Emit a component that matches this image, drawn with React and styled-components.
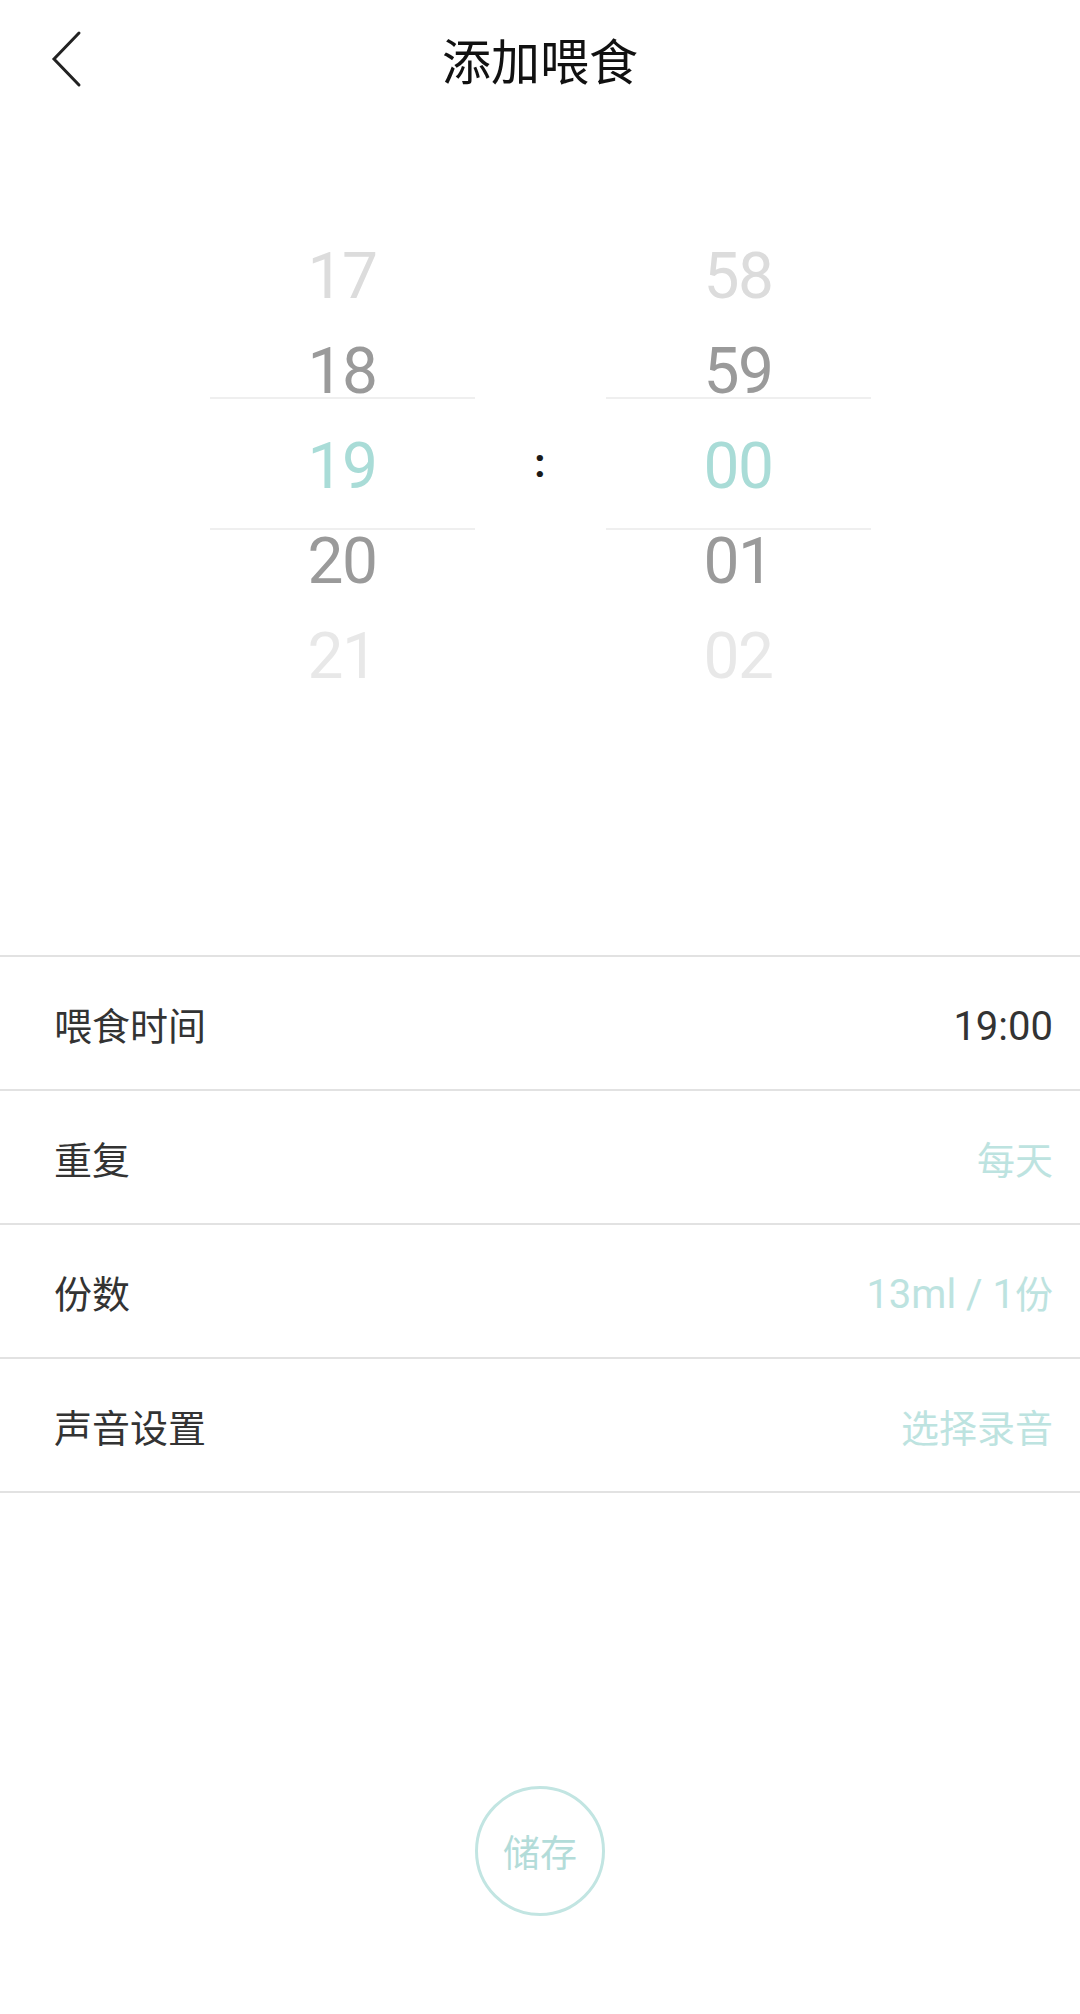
import React from "react";
import styled, { createGlobalStyle } from "styled-components";

const Global = createGlobalStyle`
  html, body { margin: 0; padding: 0; background: #fff; }
  body { font-family: Roboto, "Noto Sans CJK SC", sans-serif; }
  * { box-sizing: border-box; }
`;

const Page = styled.div`
  width: 1080px;
  min-height: 2014px;
  background: #fff;
  display: flex;
  flex-direction: column;
`;

const Header = styled.header`
  height: 124px;
  padding-bottom: 7px;
  display: grid;
  grid-template-columns: 1fr auto 1fr;
  align-items: center;
`;

const BackButton = styled.button`
  justify-self: start;
  margin-left: 48px;
  width: 40px;
  height: 60px;
  padding: 0;
  border: none;
  background: transparent;
  display: flex;
  align-items: center;
  justify-content: center;
`;

const Title = styled.h1`
  margin: 0;
  font-family: "Noto Sans CJK SC", sans-serif;
  font-size: 49px;
  font-weight: 400;
  color: #111;
  line-height: 1;
`;

const PickerArea = styled.section`
  padding-top: 105px;
  height: 831px;
  display: flex;
  justify-content: center;
  align-items: flex-start;
`;

const Column = styled.div`
  position: relative;
  width: 265px;
  display: flex;
  flex-direction: column;
  align-items: center;
  &::before {
    content: "";
    position: absolute;
    left: 0;
    right: 0;
    top: 168px;
    height: 129px;
    border-top: 2px solid #efefef;
    border-bottom: 2px solid #efefef;
    pointer-events: none;
  }
`;

const Item = styled.div`
  height: 95px;
  display: flex;
  align-items: center;
  justify-content: center;
  font-family: Roboto, sans-serif;
  font-size: 64px;
  font-weight: 400;
  letter-spacing: -1.5px;
  color: ${(p) => p.$color};
`;

const Separator = styled.div`
  width: 131px;
  height: 475px;
  display: flex;
  align-items: center;
  justify-content: center;
  font-family: Roboto, sans-serif;
  font-size: 40px;
  font-weight: 700;
  color: #1a1a1a;
  padding-bottom: 6px;
`;

const List = styled.div`
  border-top: 2px solid #e2e2e2;
`;

const Row = styled.div`
  height: 134px;
  border-bottom: 2px solid #e2e2e2;
  display: flex;
  align-items: center;
  justify-content: space-between;
  padding: 0 27px 0 54px;
`;

const Label = styled.span`
  font-family: "Noto Sans CJK SC", sans-serif;
  font-size: 38px;
  color: #333;
`;

const Value = styled.span`
  font-family: "Noto Sans CJK SC", sans-serif;
  font-size: 38px;
  color: ${(p) => (p.$accent ? "#bde3e0" : "#333")};
`;

const Latin = styled.span`
  font-family: Roboto, sans-serif;
  font-size: 40px;
`;

const Footer = styled.div`
  flex: 1;
  display: flex;
  justify-content: center;
  padding-top: 293px;
`;

const SaveButton = styled.button`
  width: 130px;
  height: 130px;
  border-radius: 50%;
  border: 3px solid #c2e5e2;
  background: #fff;
  font-family: "Noto Sans CJK SC", sans-serif;
  font-size: 37px;
  color: #b3dcd9;
  padding: 0;
  display: flex;
  align-items: center;
  justify-content: center;
`;

const colors = ["#dcdcdc", "#9a9a9a", "#a9dcd7", "#9a9a9a", "#e8e8e8"];

const Wheel = ({ values }) => (
  <Column>
    {values.map((v, i) => (
      <Item key={v} $color={colors[i]}>
        {v}
      </Item>
    ))}
  </Column>
);

const rows = [
  { label: "喂食时间", latin: "19:00", cjk: "", accent: false },
  { label: "重复", latin: "", cjk: "每天", accent: true },
  { label: "份数", latin: "13ml / 1", cjk: "份", accent: true },
  { label: "声音设置", latin: "", cjk: "选择录音", accent: true },
];

export default function App() {
  return (
    <Page>
      <Global />
      <Header>
        <BackButton aria-label="back">
          <svg width="40" height="60" viewBox="0 0 40 60">
            <polyline
              points="31,4 6,30 31,56"
              fill="none"
              stroke="#222"
              strokeWidth="3"
              strokeLinecap="round"
              strokeLinejoin="miter"
            />
          </svg>
        </BackButton>
        <Title>添加喂食</Title>
        <div />
      </Header>
      <PickerArea>
        <Wheel values={["17", "18", "19", "20", "21"]} />
        <Separator>:</Separator>
        <Wheel values={["58", "59", "00", "01", "02"]} />
      </PickerArea>
      <List>
        {rows.map((r) => (
          <Row key={r.label}>
            <Label>{r.label}</Label>
            <Value $accent={r.accent}>
              {r.latin && <Latin>{r.latin}</Latin>}
              {r.cjk}
            </Value>
          </Row>
        ))}
      </List>
      <Footer>
        <SaveButton>储存</SaveButton>
      </Footer>
    </Page>
  );
}
